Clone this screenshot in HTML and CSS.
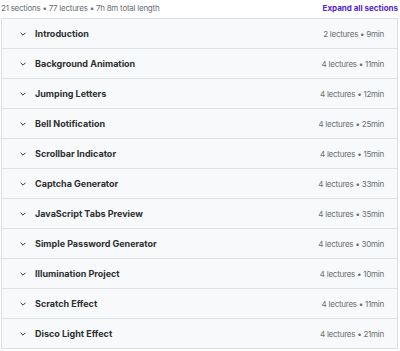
FILE: index.html
```html
<!DOCTYPE html>
<html lang="en">
<head>
    <meta charset="UTF-8">
    <meta name="viewport" content="width=device-width, initial-scale=1.0">
    <title>Course content</title>
    <link rel="stylesheet" href="styles.css">
</head>
<body>

    <div class="summary">
        <span class="summary-text">21 sections • 77 lectures • 7h 8m total length</span>
        <span class="expand-all">Expand all sections</span>
    </div>

    <div class="sections">
        <div class="section">
            <svg class="chevron" viewBox="0 0 10 6"><path d="M1 1l4 4 4-4"/></svg>
            <span class="section-title">Introduction</span>
            <span class="section-meta">2 lectures • 9min</span>
        </div>
        <div class="section">
            <svg class="chevron" viewBox="0 0 10 6"><path d="M1 1l4 4 4-4"/></svg>
            <span class="section-title">Background Animation</span>
            <span class="section-meta">4 lectures • 11min</span>
        </div>
        <div class="section">
            <svg class="chevron" viewBox="0 0 10 6"><path d="M1 1l4 4 4-4"/></svg>
            <span class="section-title">Jumping Letters</span>
            <span class="section-meta">4 lectures • 12min</span>
        </div>
        <div class="section">
            <svg class="chevron" viewBox="0 0 10 6"><path d="M1 1l4 4 4-4"/></svg>
            <span class="section-title">Bell Notification</span>
            <span class="section-meta">4 lectures • 25min</span>
        </div>
        <div class="section">
            <svg class="chevron" viewBox="0 0 10 6"><path d="M1 1l4 4 4-4"/></svg>
            <span class="section-title">Scrollbar Indicator</span>
            <span class="section-meta">4 lectures • 15min</span>
        </div>
        <div class="section">
            <svg class="chevron" viewBox="0 0 10 6"><path d="M1 1l4 4 4-4"/></svg>
            <span class="section-title">Captcha Generator</span>
            <span class="section-meta">4 lectures • 33min</span>
        </div>
        <div class="section">
            <svg class="chevron" viewBox="0 0 10 6"><path d="M1 1l4 4 4-4"/></svg>
            <span class="section-title">JavaScript Tabs Preview</span>
            <span class="section-meta">4 lectures • 35min</span>
        </div>
        <div class="section">
            <svg class="chevron" viewBox="0 0 10 6"><path d="M1 1l4 4 4-4"/></svg>
            <span class="section-title">Simple Password Generator</span>
            <span class="section-meta">4 lectures • 30min</span>
        </div>
        <div class="section">
            <svg class="chevron" viewBox="0 0 10 6"><path d="M1 1l4 4 4-4"/></svg>
            <span class="section-title">Illumination Project</span>
            <span class="section-meta">4 lectures • 10min</span>
        </div>
        <div class="section">
            <svg class="chevron" viewBox="0 0 10 6"><path d="M1 1l4 4 4-4"/></svg>
            <span class="section-title">Scratch Effect</span>
            <span class="section-meta">4 lectures • 11min</span>
        </div>
        <div class="section">
            <svg class="chevron" viewBox="0 0 10 6"><path d="M1 1l4 4 4-4"/></svg>
            <span class="section-title">Disco Light Effect</span>
            <span class="section-meta">4 lectures • 21min</span>
        </div>
    </div>

</body>
</html>
```

FILE: styles.css
```css
body {
    font-family: Inter, "Noto Sans", sans-serif;
    background-color: #fff;
    margin: 0;
    padding: 0 2px 0 1px;
    color: #2d2f31;
}
.summary {
    display: flex;
    justify-content: space-between;
    align-items: center;
    height: 18px;
}
.summary-text {
    font-size: 8px;
    letter-spacing: -0.25px;
    color: #6a6f73;
    margin-top: -3px;
}
.expand-all {
    font-size: 8px;
    font-weight: 700;
    color: #5624d0;
    margin-top: -3px;
}
.sections {
    border: 1px solid #dde1e4;
    border-bottom: none;
}
.section {
    display: flex;
    align-items: center;
    height: 29px;
    background: #f7f9fa;
    border-bottom: 1px solid #dde1e4;
    padding: 0 13px 0 18px;
}
.chevron {
    width: 6px;
    height: 4px;
    fill: none;
    stroke: #2d2f31;
    stroke-width: 1.6;
    margin-right: 9px;
}
.section-title {
    flex: 1;
    font-size: 9px;
    font-weight: 700;
}
.section-meta {
    font-size: 8px;
    letter-spacing: -0.25px;
    color: #6a6f73;
}
```
